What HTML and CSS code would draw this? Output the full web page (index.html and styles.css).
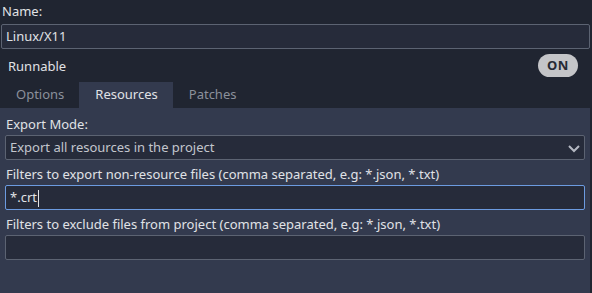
FILE: index.html
```html
<html lang="en">
<head>
  <meta charset="UTF-8" />
  <title>Export Preset</title>
  <link rel="stylesheet" href="styles.css">
</head>
<body>
  <div class="preset">
    <div class="label name-label">Name:</div>
    <div class="field name-field">Linux/X11</div>
    <div class="runnable">
      <span>Runnable</span>
      <span class="toggle">ON</span>
    </div>
    <div class="tabs">
      <div class="tab">Options</div>
      <div class="tab active">Resources</div>
      <div class="tab">Patches</div>
    </div>
    <div class="panel">
      <div class="label">Export Mode:</div>
      <div class="field select">
        <span>Export all resources in the project</span>
        <svg class="chevron" width="14" height="10" viewBox="0 0 14 10">
          <path d="M2 3 L7 8 L12 3" fill="none" stroke="#b4b8c2" stroke-width="2"/>
        </svg>
      </div>
      <div class="label">Filters to export non-resource files (comma separated, e.g: *.json, *.txt)</div>
      <div class="field focused">*.crt<span class="caret"></span></div>
      <div class="label">Filters to exclude files from project (comma separated, e.g: *.json, *.txt)</div>
      <div class="field"></div>
    </div>
  </div>
</body>
</html>
```
FILE: styles.css
```css
* {
  box-sizing: border-box;
  margin: 0;
  padding: 0;
}

body {
  background-color: #202531;
  color: #e0e2e6;
  font-family: "Noto Sans", sans-serif;
  font-size: 13px;
  width: 592px;
  height: 293px;
  overflow: hidden;
}

.preset {
  display: flex;
  flex-direction: column;
  height: 293px;
}

.label {
  height: 20px;
  line-height: 20px;
  padding-left: 2px;
}

.name-label {
  height: 24px;
  line-height: 22px;
}

.field {
  height: 25px;
  line-height: 23px;
  background-color: #262b3a;
  border: 1px solid #5c6372;
  border-radius: 2px;
  padding: 0 4px;
  color: #e0e2e6;
}

.name-field {
  margin: 0 2px 0 1px;
}

.runnable {
  display: flex;
  justify-content: space-between;
  align-items: center;
  height: 33px;
  padding: 0 14px 0 8px;
}

.toggle {
  background-color: #c4c5c8;
  color: #262a35;
  font-weight: bold;
  font-size: 13px;
  border-radius: 12px;
  width: 40px;
  height: 23px;
  line-height: 23px;
  text-align: center;
  letter-spacing: 0.5px;
}

.tabs {
  display: flex;
  height: 26px;
}

.tab {
  padding: 0 15px 0 16px;
  line-height: 25px;
  color: #8b909b;
}

.tab.active {
  background-color: #333a4e;
  color: #e0e2e6;
}

.panel {
  flex: 1;
  background-color: #333a4e;
  margin-right: 2px;
  padding: 5px 5px 0 5px;
  display: flex;
  flex-direction: column;
}

.panel .label {
  padding-left: 1px;
  height: 22px;
  line-height: 22px;
}

.panel .field {
  margin-bottom: 3px;
}

.select {
  display: flex;
  justify-content: space-between;
  align-items: center;
  color: #c3c6cd;
  padding-right: 3px;
}

.focused {
  border-color: #6c9be0;
}

.caret {
  display: inline-block;
  width: 1px;
  height: 17px;
  background-color: #e0e2e6;
  vertical-align: middle;
  margin-left: 1px;
}
```
